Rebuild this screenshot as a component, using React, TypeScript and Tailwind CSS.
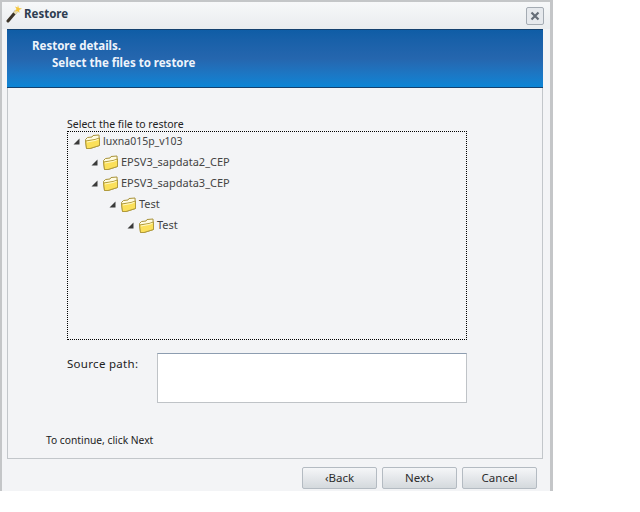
function Folder() {
  return (
    <svg width="17" height="16" viewBox="0 0 17 16" className="shrink-0">
      <path d="M1.5 5.5 L3.5 3.5 L8 3 L9 1.5 L15 1 L15.5 11.5 L6 14.5 L2.5 14.5 Z" fill="#fffbe0" stroke="#a89238" strokeWidth="1" strokeLinejoin="round" />
      <path d="M2.5 14.5 L1.5 7 L11 5.5 L15.5 4 L15.5 11.5 L6 14.5 Z" fill="#fbe05a" stroke="#b09a3c" strokeWidth="1" strokeLinejoin="round" />
      <path d="M3 8 L11 6.5 L14.5 5.3" fill="none" stroke="#fff8c8" strokeWidth="1" />
    </svg>
  );
}

function TreeRow({ label, indent, text }: { label: string; indent: string; text: string }) {
  return (
    <div className={`flex h-[21px] items-center ${indent}`}>
      <svg width="7" height="7" viewBox="0 0 7 7" className="mr-[4px] shrink-0">
        <path d="M0.5 6.5 L6.5 6.5 L6.5 0.5 Z" fill="#3a3a3a" />
      </svg>
      <Folder />
      <span className={`ml-[2px] text-[#444] ${text}`}>{label}</span>
    </div>
  );
}

function Btn({ label }: { label: string }) {
  return (
    <button className="h-[22px] w-[75px] rounded-[2px] border border-[#b4bbc2] bg-gradient-to-b from-[#f5f6f8] to-[#d4d9dd] text-[11.5px] text-[#2c2c2c]">
      {label}
    </button>
  );
}

export default function App() {
  return (
    <div className="h-[512px] w-[640px] overflow-hidden bg-white font-['Noto_Sans',sans-serif]">
      <div className="h-[491px] w-[553px] border-t-2 border-r-[3px] border-l-2 border-[#c4c6c8] bg-[#f3f4f6]">
        <div className="flex h-[27px] items-center bg-gradient-to-b from-[#f7f8f9] to-[#e9ecef] pl-[4px] pr-[5px]">
          <svg width="17" height="19" viewBox="0 0 17 19" className="-mt-[5px] shrink-0">
            <path d="M2 17 L10 7.5" stroke="#3c3428" strokeWidth="3" strokeLinecap="round" />
            <path d="M8.5 9.5 L11 6.5" stroke="#e8dcae" strokeWidth="3.4" />
            <path d="M12 1 L12.8 4 L16 4.5 L13.2 6 L13.5 9 L11.5 7 L9 7.5 L10.5 5 L9 2.5 L11.5 3.5 Z" fill="#f4c53a" />
          </svg>
          <span className="-mt-[4px] ml-[1px] flex-1 text-[11.5px] font-bold text-[#2e3d50]">Restore</span>
          <div className="mr-[1px] mt-[1px] flex h-[18px] w-[18px] items-center justify-center rounded-[2px] border border-[#a4abb3] bg-[#e6e9ed]">
            <svg width="10" height="10" viewBox="0 0 10 10">
              <path d="M1.5 1.5 L8.5 8.5 M8.5 1.5 L1.5 8.5" stroke="#666e78" strokeWidth="2.2" />
            </svg>
          </div>
        </div>

        <div className="ml-[5px] mr-[7px]">
          <div className="h-[59px] border-y border-[#14416f] bg-gradient-to-b from-[#0f5da6] via-[#2566ae] to-[#0a85d6] pl-[25px] pt-[7px] text-[11.5px] font-bold leading-[17px] text-[#eef4fb]">
            <div>Restore details.</div>
            <div className="pl-[20px]">Select the files to restore</div>
          </div>

          <div className="h-[371px] border-x border-b border-[#c2c6ca] pl-[59px] pt-[30px]">
            <div className="h-[13px] text-[10.5px] leading-[13px] text-[#222]">Select the file to restore</div>
            <div className="h-[209px] w-[400px] border border-dotted border-black pl-[5px]">
              <div className="-mt-[1px]">
                <TreeRow label="luxna015p_v103" indent="" text="text-[10.5px]" />
                <TreeRow label="EPSV3_sapdata2_CEP" indent="pl-[18px]" text="text-[11px]" />
                <TreeRow label="EPSV3_sapdata3_CEP" indent="pl-[18px]" text="text-[11px]" />
                <TreeRow label="Test" indent="pl-[36px]" text="text-[11px]" />
                <TreeRow label="Test" indent="pl-[54px]" text="text-[11px]" />
              </div>
            </div>
            <div className="mt-[13px] flex">
              <div className="w-[90px] pt-[2px] text-[11.5px] tracking-[0.3px] text-[#222]">Source path:</div>
              <div className="h-[50px] w-[310px] border border-[#bfc3c7] border-t-[#8d9db0] bg-white" />
            </div>
            <div className="-ml-[21px] mt-[31px] text-[10.25px] leading-[13px] text-[#222]">To continue, click Next</div>
          </div>

          <div className="mt-[8px] flex justify-end gap-[5px] pr-[6px]">
            <Btn label="‹Back" />
            <Btn label="Next›" />
            <Btn label="Cancel" />
          </div>
        </div>
      </div>
    </div>
  );
}
